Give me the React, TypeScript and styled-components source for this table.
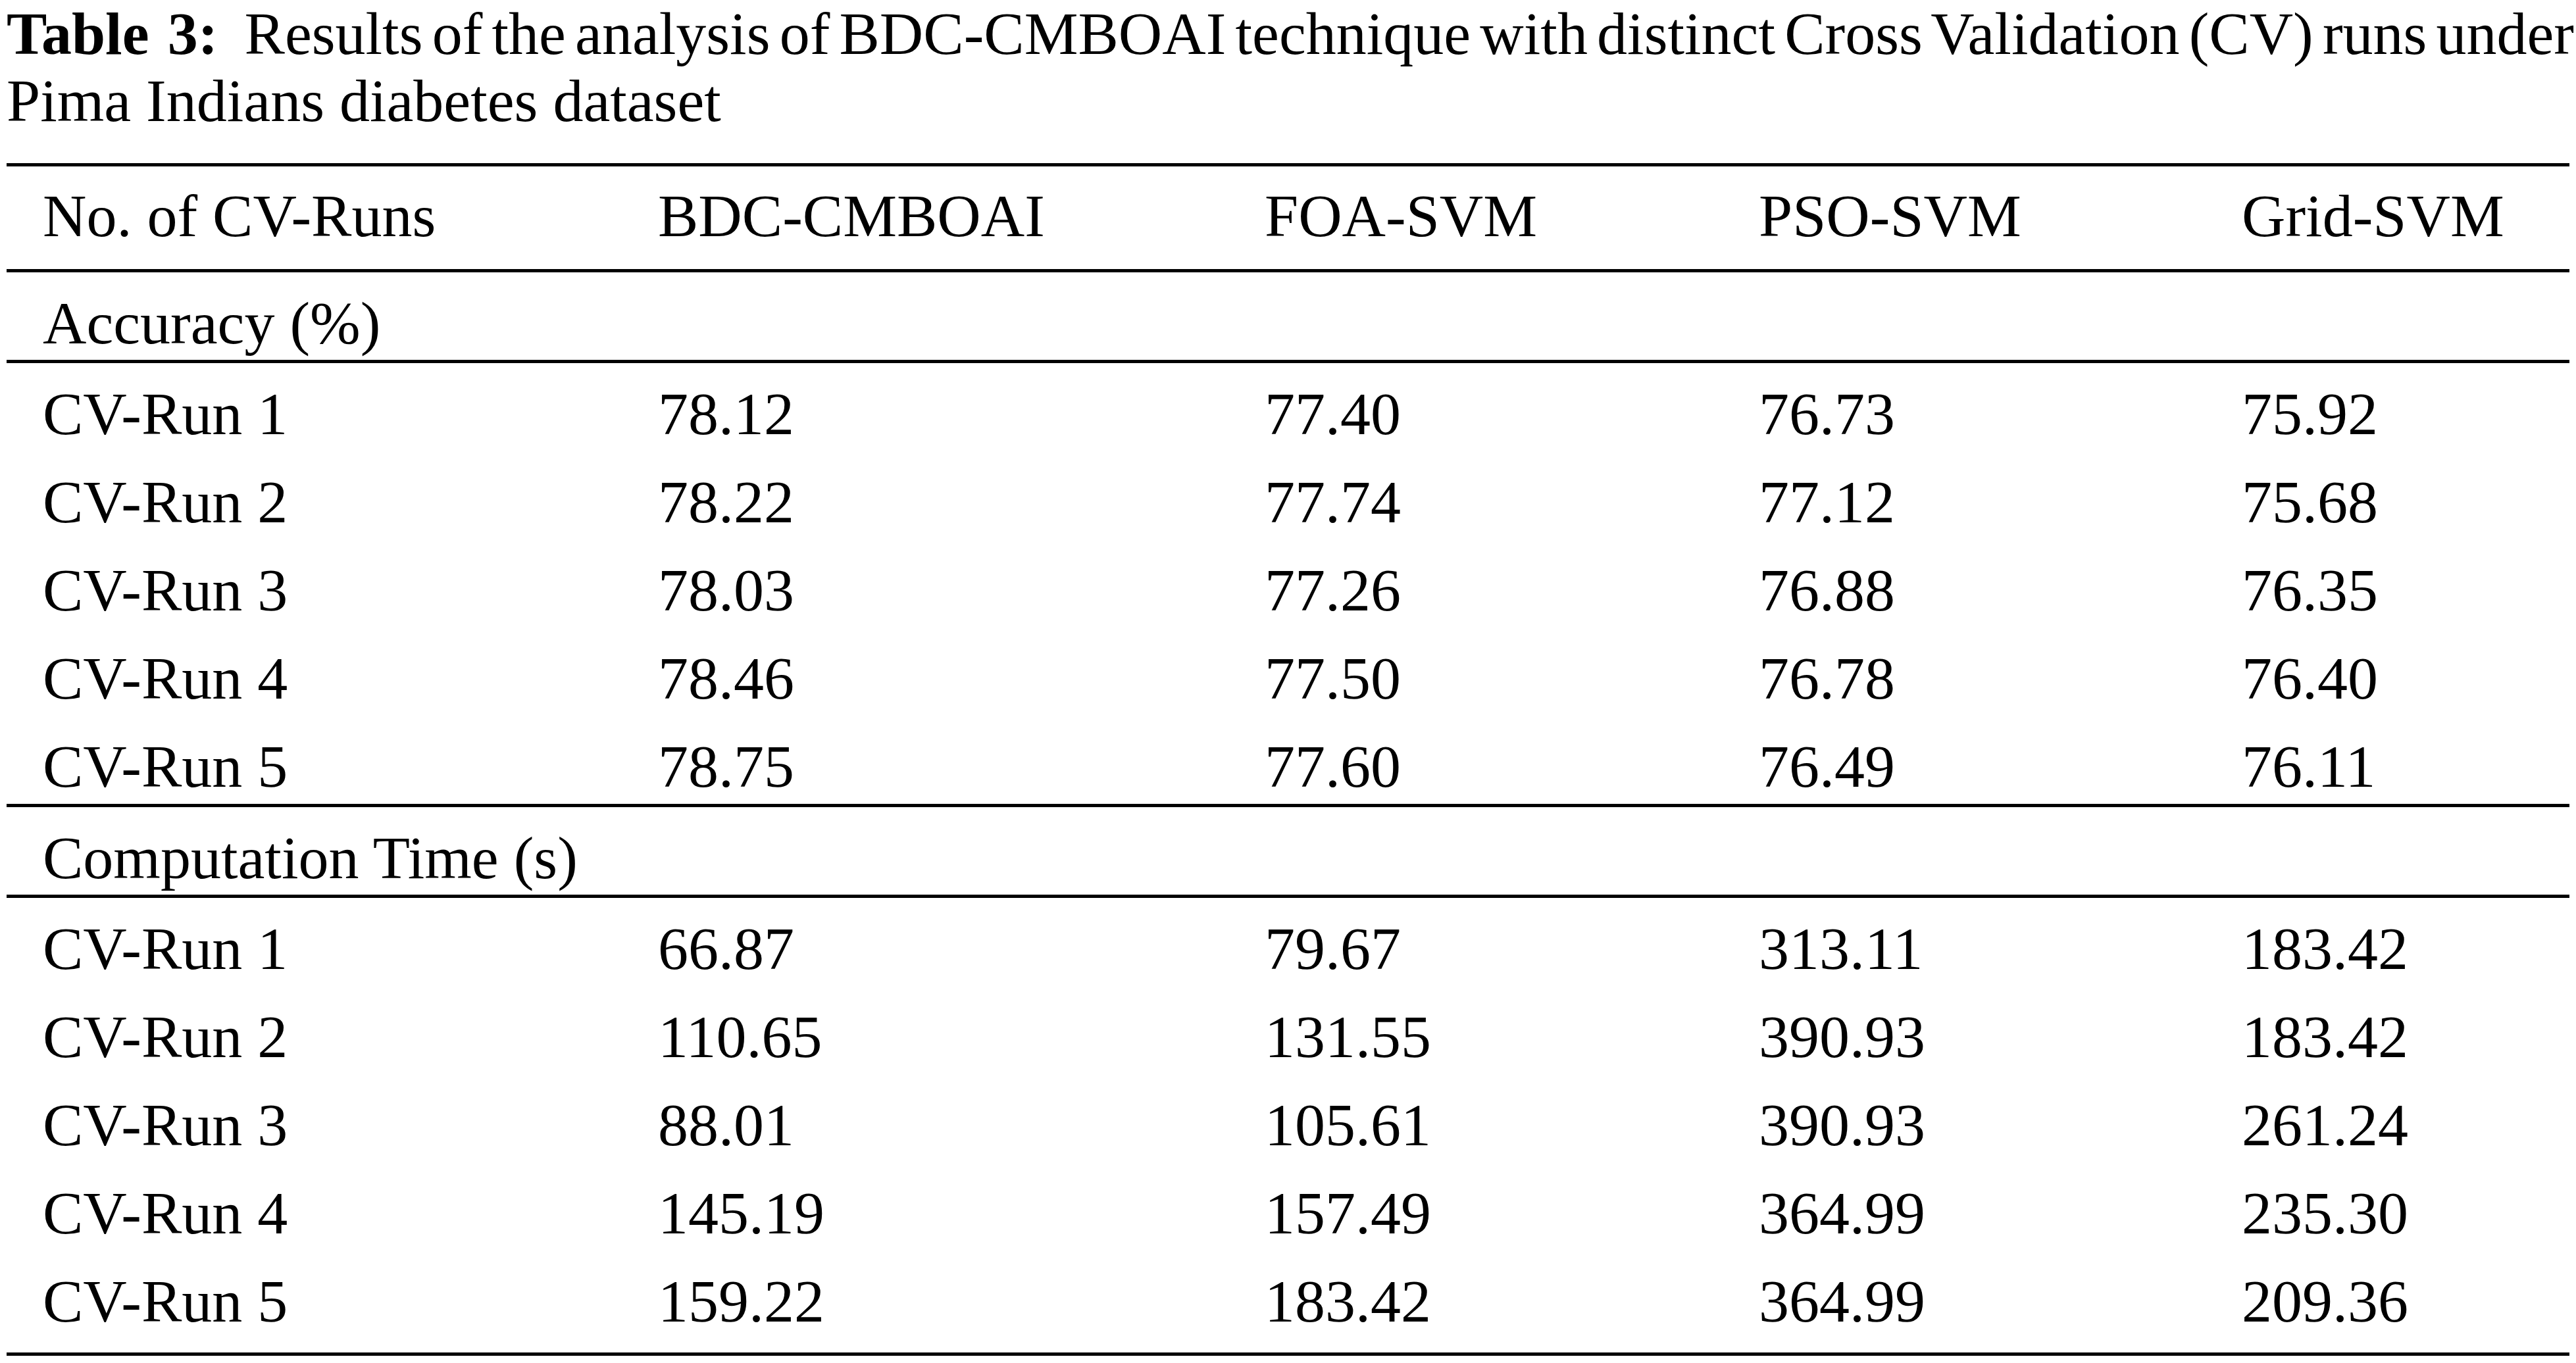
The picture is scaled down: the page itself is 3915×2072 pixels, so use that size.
import styled, { createGlobalStyle } from "styled-components";

const GlobalStyle = createGlobalStyle`
  html, body {
    margin: 0;
    padding: 0;
    background: #fff;
  }
  body {
    font-family: "Liberation Serif", "Times New Roman", serif;
    color: #000;
  }
`;

const Page = styled.div`
  width: 3915px;
  font-size: 92px;
`;

const Caption = styled.p`
  margin: 0 0 44px 0;
  padding: 0 3px 0 10px;
  line-height: 102px;
  text-align: justify;
`;

const Label = styled.b`
  font-weight: 700;
  margin-right: 12px;
`;

const Lead = styled.span`
  word-spacing: -14px;
`;

const Table = styled.div`
  margin: 0 10px;
  border-top: 5px solid #000;
`;

type Kind = "head" | "label" | "data";

const bottomPad = (kind: Kind, tail?: boolean) => {
  if (tail) return 27;
  if (kind === "head") return 30;
  if (kind === "label") return 5;
  return 6;
};

const Row = styled.div<{ $kind: Kind; $rule?: boolean; $tail?: boolean }>`
  display: grid;
  grid-template-columns: 935px 922px 751px 734px 1fr;
  padding-left: 55px;
  padding-top: ${({ $kind }) => ($kind === "head" ? 25 : 27)}px;
  padding-bottom: ${({ $kind, $tail }) => bottomPad($kind, $tail)}px;
  line-height: 101px;
  border-bottom: ${({ $rule }) => ($rule ? "5px solid #000" : "none")};
`;

const Cell = styled.div`
  white-space: nowrap;
`;

const SectionLabel = styled.div`
  grid-column: 1 / -1;
  white-space: nowrap;
`;

const headers = ["No. of CV-Runs", "BDC-CMBOAI", "FOA-SVM", "PSO-SVM", "Grid-SVM"];

const accuracy = [
  ["CV-Run 1", "78.12", "77.40", "76.73", "75.92"],
  ["CV-Run 2", "78.22", "77.74", "77.12", "75.68"],
  ["CV-Run 3", "78.03", "77.26", "76.88", "76.35"],
  ["CV-Run 4", "78.46", "77.50", "76.78", "76.40"],
  ["CV-Run 5", "78.75", "77.60", "76.49", "76.11"],
];

const computation = [
  ["CV-Run 1", "66.87", "79.67", "313.11", "183.42"],
  ["CV-Run 2", "110.65", "131.55", "390.93", "183.42"],
  ["CV-Run 3", "88.01", "105.61", "390.93", "261.24"],
  ["CV-Run 4", "145.19", "157.49", "364.99", "235.30"],
  ["CV-Run 5", "159.22", "183.42", "364.99", "209.36"],
];

const Section = ({
  title,
  rows,
  closing,
}: {
  title: string;
  rows: string[][];
  closing?: boolean;
}) => (
  <>
    <Row $kind="label" $rule>
      <SectionLabel>{title}</SectionLabel>
    </Row>
    {rows.map((r, i) => {
      const isLast = i === rows.length - 1;
      return (
        <Row key={r[0]} $kind="data" $rule={isLast} $tail={isLast && closing}>
          {r.map((v, j) => (
            <Cell key={j}>{v}</Cell>
          ))}
        </Row>
      );
    })}
  </>
);

const App = () => {
  return (
    <>
      <GlobalStyle />
      <Page>
        <Caption>
          <Label>Table 3:</Label>{" "}
          <Lead>
            Results of the analysis of BDC-CMBOAI technique with distinct Cross
            Validation (CV) runs under
          </Lead>{" "}
          Pima Indians diabetes dataset
        </Caption>
        <Table>
          <Row $kind="head" $rule>
            {headers.map((h) => (
              <Cell key={h}>{h}</Cell>
            ))}
          </Row>
          <Section title="Accuracy (%)" rows={accuracy} />
          <Section title="Computation Time (s)" rows={computation} closing />
        </Table>
      </Page>
    </>
  );
};

export default App;
